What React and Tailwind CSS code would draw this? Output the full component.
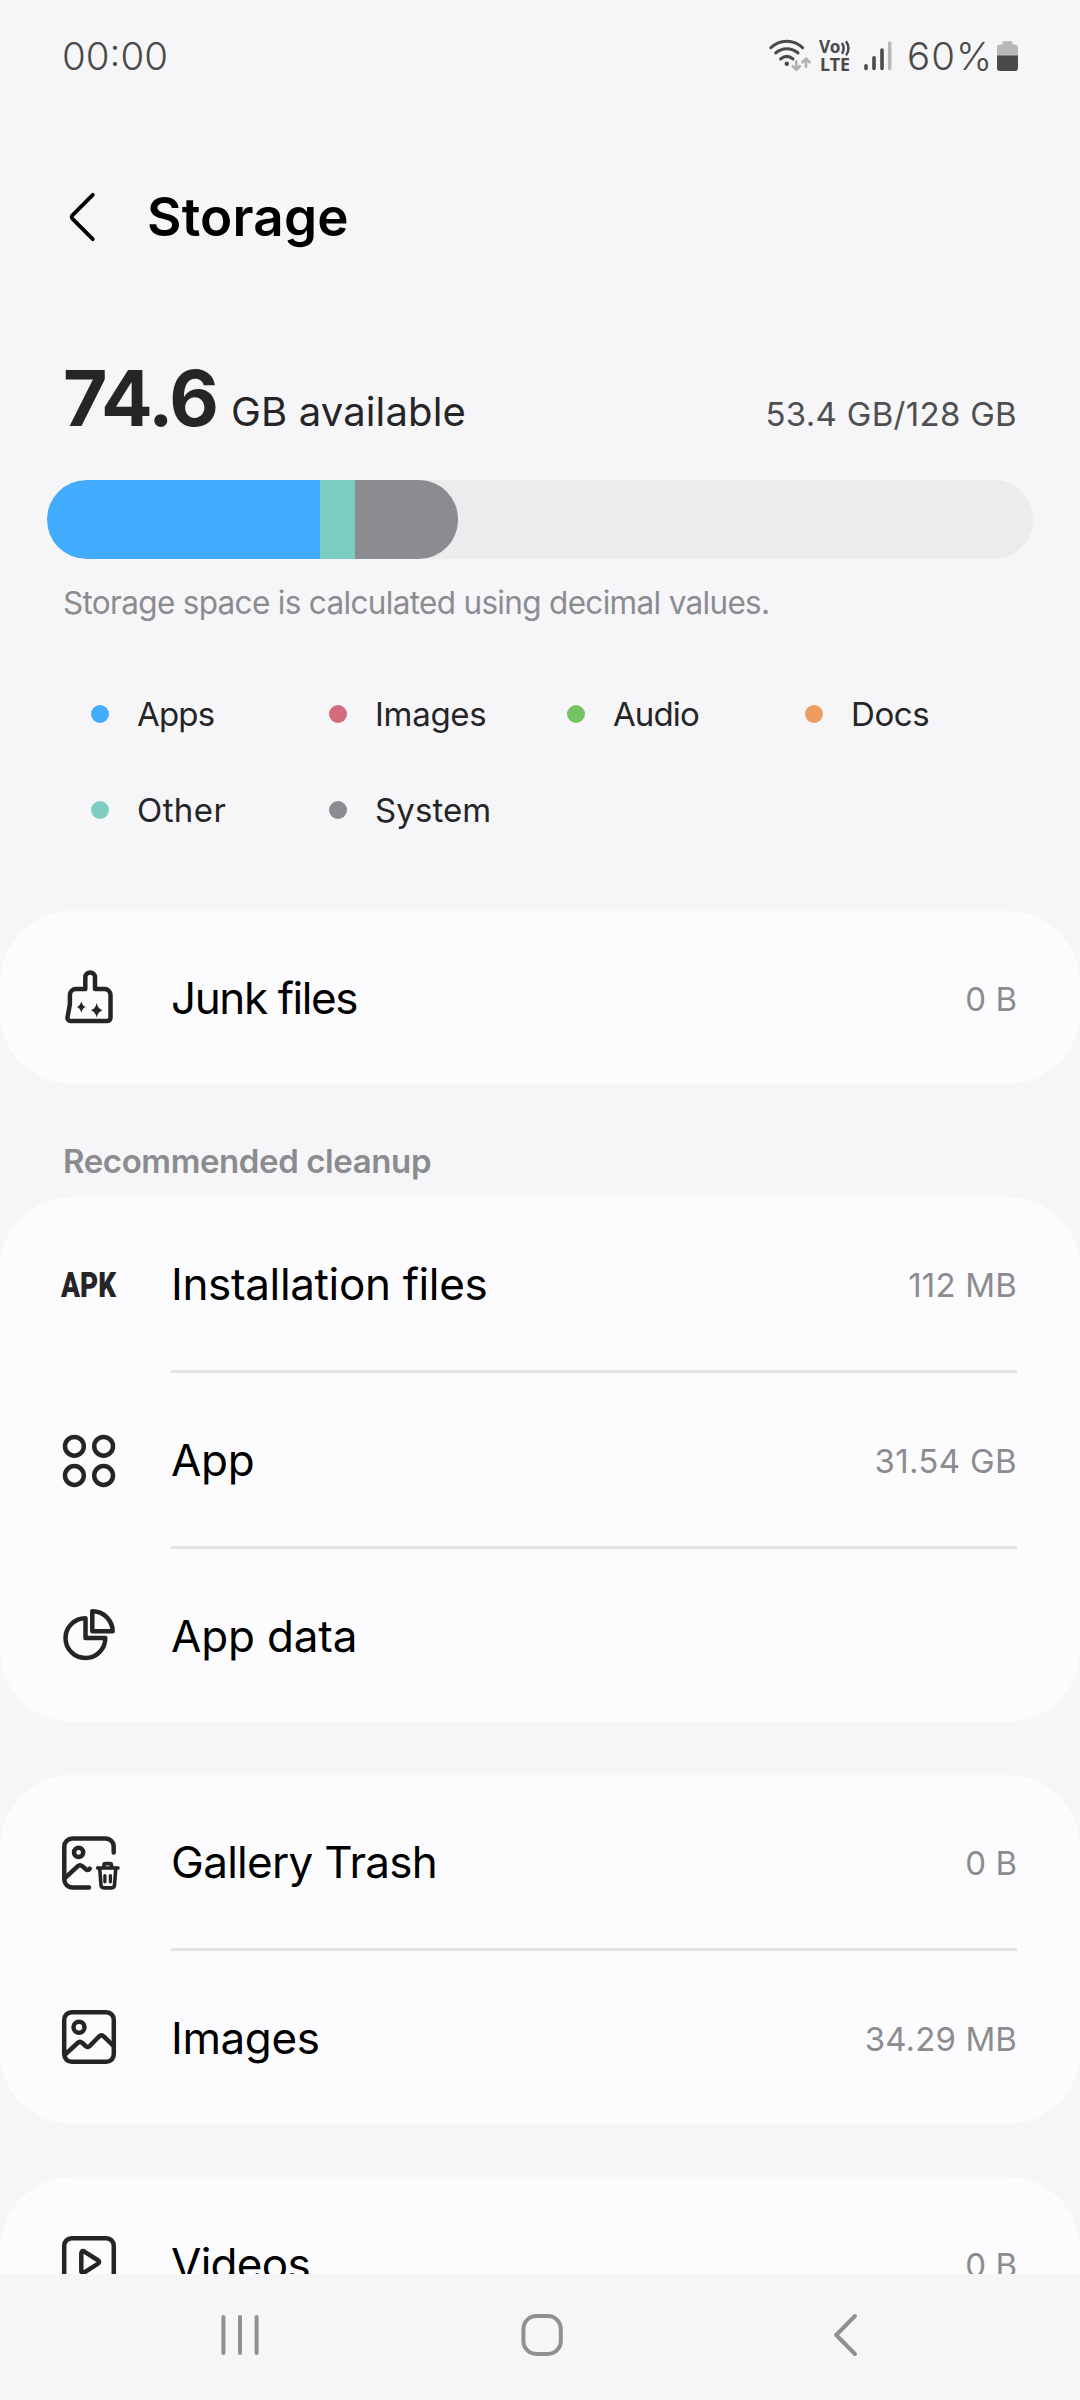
const INK = "#252528";

function LineIcon({ children, width = 4.5 }) {
  return (
    <svg
      className="mt-14 h-[60px] w-[60px] shrink-0 self-start overflow-visible"
      viewBox="0 0 60 60"
      fill="none"
      stroke={INK}
      strokeWidth={width}
      strokeLinecap="round"
      strokeLinejoin="round"
      aria-hidden="true"
    >
      {children}
    </svg>
  );
}

function BroomIcon() {
  return (
    <LineIcon>
      <path d="M26.3 22V10.3a4.85 4.85 0 0 1 9.7 0V22h9.5a6 6 0 0 1 6 6v22.7a3.4 3.4 0 0 1-3.4 3.4H11.6a3.2 3.2 0 0 1-3.1-3.8l2.4-13.1V28a6 6 0 0 1 6-6h9.4" />
      <path d="M22.3 34.2q1 4.8 4.5 5.8q-3.5 1-4.5 5.8q-1-4.8-4.5-5.8q3.5-1 4.5-5.8Z" fill={INK} stroke="none" />
      <path d="M37.7 36q1.3 6 5.9 7.3q-4.6 1.3-5.9 7.3q-1.3-6-5.9-7.3q4.6-1.3 5.9-7.3Z" fill={INK} stroke="none" />
    </LineIcon>
  );
}

function ApkIcon() {
  return (
    <span className="w-[60px] shrink-0">
      <span className="mt-[2px] ml-[2px] block w-[70px] origin-left scale-x-[0.81] font-['Roboto',sans-serif] text-[34.5px] leading-[44px] font-black text-[#252528]">
        APK
      </span>
    </span>
  );
}

function AppsIcon() {
  return (
    <LineIcon>
      <circle cx="15.4" cy="17.3" r="9.4" />
      <circle cx="44.6" cy="17.3" r="9.4" />
      <circle cx="15.4" cy="46.5" r="9.4" />
      <circle cx="44.6" cy="46.5" r="9.4" />
    </LineIcon>
  );
}

function PieIcon() {
  return (
    <LineIcon>
      <path d="M26.5 13.2V33h19.8A19.9 19.9 0 1 1 26.5 13.2Z" />
      <path d="M33.3 6.3A20.3 20.3 0 0 1 53.7 26.2H33.3Z" />
    </LineIcon>
  );
}

function GalleryTrashIcon() {
  return (
    <LineIcon>
      <path d="M54.7 21.5V15.5a8 8 0 0 0-8-8H13.3a8 8 0 0 0-8 8v33a8 8 0 0 0 8 8H30" />
      <circle cx="19.6" cy="21.4" r="4.6" />
      <path d="M5.8 47.2 18.6 35.3q2.4-2.1 4.8 0L27.2 38.4q1.8 1.4 3.6-.7" />
      <g strokeWidth="3.6">
        <path d="M38.6 37H59" />
        <path d="M44.9 36.4v-2.2q0-1.6 1.6-1.6h4.4q1.6 0 1.6 1.6v2.2" />
        <path d="m40.7 37.4 1.3 16.8q.2 2.7 2.9 2.7h7.7q2.7 0 2.9-2.7l1.3-16.8" />
        <path d="M45.9 44.6v6.2M51.4 44.6v6.2" strokeWidth="3.3" />
      </g>
    </LineIcon>
  );
}

function ImageIcon() {
  return (
    <LineIcon>
      <rect x="5.2" y="5.2" width="49.6" height="49.6" rx="7.5" />
      <circle cx="20" cy="20.3" r="5.5" />
      <path d="M6 47.6 18.6 36q2.4-2.1 4.8 0l3.2 3q2.2 1.9 4.4-.2l8.8-9.1q2.6-2.4 5.2-.1l9.5 9.4" />
    </LineIcon>
  );
}

function VideoIcon() {
  return (
    <LineIcon>
      <rect x="5.2" y="5.2" width="49.6" height="49.6" rx="7.5" />
      <path d="M22.3 20.6q0-3.8 3.4-1.8L38.6 27q3 2 0 4L25.7 39.2q-3.4 2-3.4-1.8Z" />
    </LineIcon>
  );
}

function Row({ icon, label, value, tracking, valueTracking }) {
  return (
    <div className="flex h-[173px] items-center pr-[63px] pl-[59px]">
      {icon}
      <span className={`ml-[52px] text-[44px] leading-[60px] whitespace-nowrap text-black ${tracking}`}>{label}</span>
      {value && (
        <span className={`mt-[2px] ml-auto text-[33px] leading-[44px] whitespace-nowrap text-[#8c8c90] ${valueTracking}`}>{value}</span>
      )}
    </div>
  );
}

function Card({ children }) {
  return <section className="rounded-[72px] bg-[#fcfcfe]">{children}</section>;
}

function Divider() {
  return <div className="mr-[63px] ml-[171px] h-[3px] bg-[#e3e3e5]" />;
}

function StatusBar() {
  return (
    <div className="flex h-[112px] shrink-0 items-center pl-[62px] text-[#4a4a4a]">
      <span className="mt-[2px] text-[38.5px] font-[350] tracking-[0px]">00:00</span>
      <div className="mr-[62px] ml-auto flex items-center">
        <svg className="h-9 w-[43px] overflow-visible" viewBox="0 0 43 36" fill="none" strokeLinecap="round" strokeWidth="3" aria-hidden="true">
          <g stroke="#4a4a4a">
            <path d="M1.8 9.8C10.5.9 25 .9 33.7 9.8" />
            <path d="M6.7 15C13.2 9.3 22.4 9.3 29 15" />
            <path d="M11.6 21q6.2-5.2 12.4 0" />
          </g>
          <circle cx="17.8" cy="25.7" r="2.2" fill="#4a4a4a" />
          <path d="M27.3 23.4v8.4m-3.5-3.6 3.5 3.6 3.5-3.6M37 29v-8.4m-3.6 3.6L37 20.6l3.6 3.6" stroke="#b3b3b5" strokeWidth="2.7" strokeLinejoin="round" />
        </svg>
        <svg className="ml-[6px] h-9 w-[34px] overflow-visible" viewBox="0 0 34 36" fill="#4a4a4a" aria-hidden="true">
          <text x="1" y="15" fontFamily="Noto Sans, sans-serif" fontWeight="700" fontSize="17.3" textLength="21.5" lengthAdjust="spacingAndGlyphs">Vo</text>
          <text x="2" y="32.8" fontFamily="Noto Sans, sans-serif" fontWeight="700" fontSize="17.3" textLength="30" lengthAdjust="spacingAndGlyphs">LTE</text>
          <path d="M23.9 5q3.6 5.2 0 10.8M28 3.2q5 7 0 14.2" fill="none" stroke="#4a4a4a" strokeWidth="2.5" />
        </svg>
        <svg className="ml-[11px] h-8 w-[29px]" viewBox="0 0 29 32" fill="none" stroke="#4a4a4a" strokeWidth="3.6" strokeLinecap="round" aria-hidden="true">
          <path d="M3 25.8v2.6M11 17.8v10.6M19 10v18.4" />
          <path d="M26.7 3v25.4" stroke="#b8b8ba" />
        </svg>
        <span className="mt-[2px] ml-[15px] w-[90px] text-[38.5px] font-[350] tracking-[1px]">60%</span>
        <svg className="h-8 w-[21px]" viewBox="0 0 21 32" aria-hidden="true">
          <path d="M6.5 1.2h8q1 0 1 1v2.3H18q3 0 3 3V16H0V7.5q0-3 3-3h2.5V2.2q0-1 1-1Z" fill="#b8b8ba" />
          <path d="M0 15.5h21V28q0 3-3 3H3q-3 0-3-3Z" fill="#4a4a4a" />
        </svg>
      </div>
    </div>
  );
}

const LEGEND = [
  { name: "Apps", dot: "bg-[#42acff]", tracking: "tracking-[-0.8px]" },
  { name: "Images", dot: "bg-[#d66a7d]", tracking: "tracking-[-0.3px]" },
  { name: "Audio", dot: "bg-[#74c365]", tracking: "tracking-[-0.9px]" },
  { name: "Docs", dot: "bg-[#ee9d60]", tracking: "tracking-[-0.4px]" },
  { name: "Other", dot: "bg-[#7ccdc0]", tracking: "tracking-[0.4px]" },
  { name: "System", dot: "bg-[#8c8c90]", tracking: "tracking-[0.1px]" },
];

export default function App() {
  return (
    <div className="flex h-[2400px] w-[1080px] flex-col overflow-hidden bg-[#f6f6f8] font-['Inter',sans-serif]">
      <StatusBar />
      <header className="flex h-[209px] shrink-0 items-center pl-[68px]">
        <svg className="h-[52px] w-[30px]" viewBox="0 0 30 52" fill="none" stroke="#000" strokeWidth="3.8" strokeLinecap="round" strokeLinejoin="round" aria-hidden="true">
          <path d="M24.8 3.8 4.6 24.1q-1.8 1.9 0 3.8L24.8 48.2" />
        </svg>
        <h1 className="mt-[2px] ml-[49px] text-[53px] font-semibold tracking-[0.2px] text-black">Storage</h1>
      </header>

      <main className="min-h-0 flex-1 overflow-hidden">
        <div className="mt-[27px] flex h-[100px] items-baseline pr-[63px] pl-[63px] leading-[100px] whitespace-nowrap text-[#252528]">
          <span className="text-[76.6px] font-bold tracking-[-2.1px]">74.6</span>
          <span className="ml-[14px] text-[40px] tracking-[0.15px]">GB available</span>
          <span className="ml-auto text-[33px] tracking-[0.3px] text-[#4f4f52]">53.4 GB/128 GB</span>
        </div>
        <div className="mx-[47px] mt-8 h-[79px] overflow-hidden rounded-[39px] bg-[#ececee]">
          <div className="flex h-full w-[411px] overflow-hidden rounded-[39px]">
            <div className="w-[273px] bg-[#42acff]" />
            <div className="w-[35px] bg-[#7ccdc0]" />
            <div className="flex-1 bg-[#8c8c90]" />
          </div>
        </div>
        <p className="mt-6 pl-[63px] text-[31.5px] leading-[40px] tracking-[-0.68px] whitespace-nowrap text-[#8c8c90]">
          Storage space is calculated using decimal values.
        </p>
        <ul className="mt-[43px] mb-[53px] grid grid-cols-[repeat(4,238px)] pl-[91px]">
          {LEGEND.map((item) => (
            <li key={item.name} className="flex h-24 items-center gap-[28px] text-[33px] text-[#252528]">
              <span className={`h-[18px] w-[18px] rounded-full ${item.dot}`} />
              <span className={`mt-[2px] ${item.tracking}`}>{item.name}</span>
            </li>
          ))}
        </ul>

        <Card>
          <Row icon={<BroomIcon />} label="Junk files" tracking="tracking-[-1.4px]" value="0 B" valueTracking="tracking-[0px]" />
        </Card>
        <h2 className="flex h-[113px] items-center pt-[43px] pl-[63px] text-[33px] font-semibold tracking-[-0.4px] text-[#8c8c90]">
          Recommended cleanup
        </h2>
        <Card>
          <Row icon={<ApkIcon />} label="Installation files" tracking="tracking-[-0.35px]" value="112 MB" valueTracking="tracking-[0.2px]" />
          <Divider />
          <Row icon={<AppsIcon />} label="App" tracking="tracking-[-0.3px]" value="31.54 GB" valueTracking="tracking-[0.35px]" />
          <Divider />
          <Row icon={<PieIcon />} label="App data" tracking="tracking-[-0.15px]" />
        </Card>
        <div className="h-[53px]" />
        <Card>
          <Row icon={<GalleryTrashIcon />} label="Gallery Trash" tracking="tracking-[-0.7px]" value="0 B" valueTracking="tracking-[0px]" />
          <Divider />
          <Row icon={<ImageIcon />} label="Images" tracking="tracking-[-0.4px]" value="34.29 MB" valueTracking="tracking-[0.1px]" />
        </Card>
        <div className="h-[53px]" />
        <Card>
          <Row icon={<VideoIcon />} label="Videos" tracking="tracking-[-0.7px]" value="0 B" valueTracking="tracking-[0px]" />
        </Card>
      </main>

      <nav className="flex h-[126px] shrink-0 items-center bg-[#f6f6f8] pb-1 pl-[221px]">
        <svg className="h-11 w-[38px]" viewBox="0 0 38 44" stroke="#909090" strokeWidth="4" strokeLinecap="round" aria-hidden="true">
          <path d="M2.4 4v36M19 4v36M35.6 4v36" />
        </svg>
        <svg className="ml-[262px] h-11 w-[42px]" viewBox="0 0 42 44" fill="none" stroke="#909090" strokeWidth="4" aria-hidden="true">
          <rect x="2.4" y="3" width="37.4" height="38" rx="13" />
        </svg>
        <svg className="ml-[270px] h-11 w-[26px]" viewBox="0 0 26 44" fill="none" stroke="#909090" strokeWidth="4" strokeLinecap="round" strokeLinejoin="round" aria-hidden="true">
          <path d="M22 3 3.2 22 22 41" />
        </svg>
      </nav>
    </div>
  );
}
